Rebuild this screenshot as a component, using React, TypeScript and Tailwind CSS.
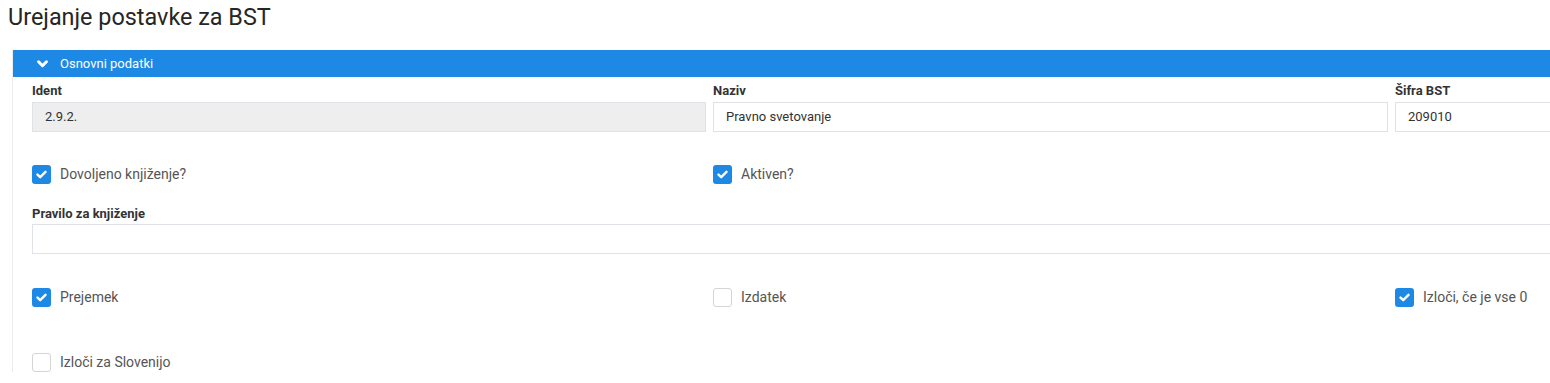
import React from 'react'

// Form: "Urejanje postavke za BST" — one collapsible panel with fields + checkboxes
const COLS = 'grid grid-cols-[674px_675px_675px] gap-x-[7px]'

function Label({ children }: { children: React.ReactNode }) {
  return <div className="h-[16px] text-[13px] leading-[16px] font-bold text-[#333]">{children}</div>
}

function Input({ value, disabled = false }: { value?: string; disabled?: boolean }) {
  return (
    <div
      className={
        'flex h-[30px] items-center border border-[#dfe3e8] pl-[12px] text-[13px] text-[#333] ' +
        (disabled ? 'bg-[#eeeeee]' : 'bg-white')
      }
    >
      {value}
    </div>
  )
}

function Check({ label, checked = false }: { label: string; checked?: boolean }) {
  return (
    <div className="flex h-[19px] items-center gap-[9px]">
      {checked ? (
        <span className="flex h-[19px] w-[19px] items-center justify-center rounded-[3px] bg-[#1e88e5]">
          <svg width="11" height="9" viewBox="0 0 11 9" fill="none">
            <path d="M1.5 4.6 L4.2 7.2 L9.5 1.8" stroke="white" strokeWidth="2.4" strokeLinecap="round" strokeLinejoin="round" />
          </svg>
        </span>
      ) : (
        <span className="h-[19px] w-[19px] rounded-[3px] border border-[#d4d4d4] bg-white" />
      )}
      <span className="text-[14px] text-[#555]">{label}</span>
    </div>
  )
}

export default function App() {
  return (
    <div className="h-[383px] w-[1550px] overflow-hidden bg-white font-['Roboto',sans-serif]">
      <h1 className="pl-[8px] pt-[4px] text-[23.4px] leading-[26px] text-[#262626]">Urejanje postavke za BST</h1>

      <div className="ml-[12px] mt-[20px] w-[2100px] border-l border-[#ececec]">
        {/* ── Panel header ── */}
        <div className="flex h-[27px] items-center gap-[12px] bg-[#1e88e5] pl-[24px] text-[13px] text-white">
          <svg width="11" height="8" viewBox="0 0 11 8" fill="none">
            <path d="M1.6 1.8 L5.5 5.7 L9.4 1.8" stroke="white" strokeWidth="3" strokeLinecap="round" strokeLinejoin="round" />
          </svg>
          <span>Osnovni podatki</span>
        </div>

        {/* ── Body ── */}
        <div className="pl-[19px] pt-[6px]">
          <div className={COLS}>
            <div>
              <Label>Ident</Label>
              <div className="mt-[3px]">
                <Input value="2.9.2." disabled />
              </div>
            </div>
            <div>
              <Label>Naziv</Label>
              <div className="mt-[3px]">
                <Input value="Pravno svetovanje" />
              </div>
            </div>
            <div>
              <Label>Šifra BST</Label>
              <div className="mt-[3px]">
                <Input value="209010" />
              </div>
            </div>
          </div>

          <div className={COLS + ' mt-[33px]'}>
            <Check label="Dovoljeno knjiženje?" checked />
            <Check label="Aktiven?" checked />
          </div>

          <div className="mt-[22px]">
            <Label>Pravilo za knjiženje</Label>
            <div className="mt-[2px]">
              <Input />
            </div>
          </div>

          <div className={COLS + ' mt-[34px]'}>
            <Check label="Prejemek" checked />
            <Check label="Izdatek" />
            <Check label="Izloči, če je vse 0" checked />
          </div>

          <div className={COLS + ' mt-[46px]'}>
            <Check label="Izloči za Slovenijo" />
          </div>
        </div>
      </div>
    </div>
  )
}
